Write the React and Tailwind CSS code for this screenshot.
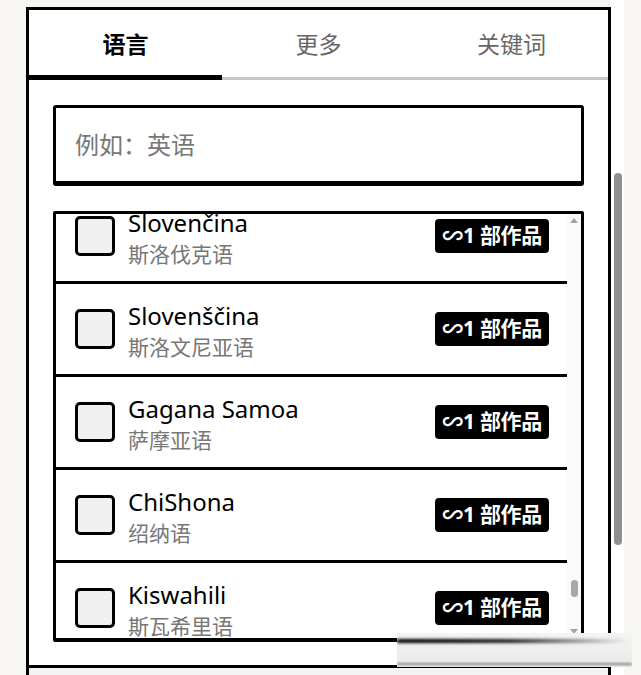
import React from "react";

const langs = [
  { name: "Slovenčina", sub: "斯洛伐克语" },
  { name: "Slovenščina", sub: "斯洛文尼亚语" },
  { name: "Gagana Samoa", sub: "萨摩亚语" },
  { name: "ChiShona", sub: "绍纳语" },
  { name: "Kiswahili", sub: "斯瓦希里语" },
];

const tabs = ["语言", "更多", "关键词"];

export default function App() {
  return (
    <div className="relative flex w-[641px] h-[675px] overflow-hidden bg-[#f8f7f3] font-['Noto_Sans','Noto_Sans_CJK_SC',sans-serif]">
      <div className="pl-[26px] pt-[7px]">
        <div className="w-[585px] h-[700px] flex flex-col border-[3px] border-black bg-white">
          {/* tabs */}
          <div className="flex h-[70px]">
            {tabs.map((t, i) => (
              <div key={t} className="flex-1 flex flex-col">
                <div
                  className={
                    i === 0
                      ? "flex-1 flex items-center justify-center pt-[3px] text-[23px] font-bold text-black"
                      : "flex-1 flex items-center justify-center pt-[3px] text-[23px] text-[#666]"
                  }
                >
                  {t}
                </div>
                {i === 0 ? (
                  <div className="h-[5px] bg-black" />
                ) : (
                  <div className="mt-[2px] h-[3px] bg-[#c8c8c8]" />
                )}
              </div>
            ))}
          </div>

          <div className="px-[24px] pt-[25px] h-[585px]">
            {/* search */}
            <div className="h-[81px] flex items-center border-[3px] border-b-[5px] border-black rounded-[3px] pl-[19px] text-[24px] text-[#777]">
              例如：英语
            </div>

            {/* list */}
            <div className="mt-[25px] h-[431px] flex border-[3px] border-b-[4px] border-black rounded-[2px] overflow-hidden">
              <div className="flex-1 overflow-hidden">
                <div className="-mt-[23px]">
                  {langs.map((l) => (
                    <div
                      key={l.name}
                      className="h-[93px] flex items-center border-b-[3px] border-black pl-[19px] pr-[18px]"
                    >
                      <div className="w-[40px] h-[40px] shrink-0 rounded-[5px] border-[3px] border-black bg-[#f0f0f0]" />
                      <div className="flex-1 ml-[13px] pt-[2px] flex flex-col">
                        <span className="text-[24px] leading-[34px] text-black">{l.name}</span>
                        <span className="text-[21px] leading-[28px] text-[#777]">{l.sub}</span>
                      </div>
                      <div className="h-[34px] flex items-center rounded-[4px] bg-black px-[7px] text-[21px] font-bold tracking-[-0.3px] text-white">
                        ∽1 部作品
                      </div>
                    </div>
                  ))}
                </div>
              </div>
              {/* inner scrollbar */}
              <div className="w-[14px] flex flex-col items-center bg-[#fafafa] py-[4px]">
                <div className="w-0 h-0 border-l-[4px] border-r-[4px] border-b-[5px] border-l-transparent border-r-transparent border-b-[#a3a3a3]" />
                <div className="flex-1" />
                <div className="w-[7px] h-[17px] rounded-full bg-[#a8a8a8]" />
                <div className="h-[32px]" />
                <div className="w-0 h-0 border-l-[4px] border-r-[4px] border-t-[5px] border-l-transparent border-r-transparent border-t-[#a3a3a3]" />
              </div>
            </div>
          </div>

          <div className="border-t-[3px] border-black bg-[#f3f3f3] flex-1" />
        </div>
      </div>

      {/* page scrollbar */}
      <div className="w-[13px] h-full bg-white pt-[173px] flex justify-center">
        <div className="w-[8px] h-[372px] rounded-full bg-[#8f8f8f]" />
      </div>

      {/* blurred streak */}
      <div className="absolute left-[397px] top-[633px] w-[235px] h-[34px] bg-gradient-to-b from-[#f4f4f4] to-[#e9e9e9] overflow-hidden">
        <div className="mt-[6px] h-[4px] w-[230px] bg-gradient-to-r from-black via-[#222] to-transparent blur-[1.5px]" />
        <div className="mt-[20px] h-[2px] w-full bg-[#888] blur-[1px]" />
      </div>
    </div>
  );
}
